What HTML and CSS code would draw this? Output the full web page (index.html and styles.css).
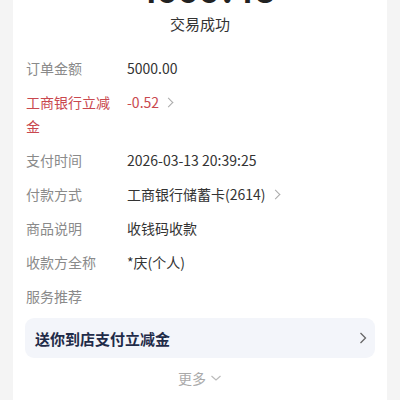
FILE: index.html
```html
<!DOCTYPE html>
<html lang="zh-CN">
<head>
    <meta charset="UTF-8">
    <title>交易详情</title>
    <link rel="stylesheet" href="styles.css">
</head>
<body>
    <div class="sheet">
        <div class="amount">-4999.48</div>
        <div class="status">交易成功</div>
        <div class="rows">
            <div class="row"><span class="label">订单金额</span><span class="value">5000.00</span></div>
            <div class="row red"><span class="label">工商银行立减金</span><span class="value">-0.52<i class="arrow"></i></span></div>
            <div class="row"><span class="label">支付时间</span><span class="value">2026-03-13 20:39:25</span></div>
            <div class="row"><span class="label">付款方式</span><span class="value">工商银行储蓄卡(2614)<i class="arrow"></i></span></div>
            <div class="row"><span class="label">商品说明</span><span class="value">收钱码收款</span></div>
            <div class="row"><span class="label">收款方全称</span><span class="value">*庆(个人)</span></div>
            <div class="row"><span class="label">服务推荐</span></div>
        </div>
        <div class="promo">
            <span>送你到店支付立减金</span>
            <svg width="8" height="14" viewBox="0 0 8 14"><path d="M1.5 2 L6.5 7 L1.5 12" fill="none" stroke="#666" stroke-width="1.3"/></svg>
        </div>
        <div class="more">更多<svg width="12" height="8" viewBox="0 0 12 8"><path d="M1.5 2 L6 6 L10.5 2" fill="none" stroke="#bbb" stroke-width="1.2"/></svg></div>
    </div>
</body>
</html>
```

FILE: styles.css
```css
body { margin: 0; background: #f4f4f4; font-family: "Noto Sans CJK SC", "Noto Sans", sans-serif; }
.sheet { background: #fff; margin: 0 13px; height: 400px; overflow: hidden; }
.amount { font-size: 34px; font-weight: bold; color: #222; text-align: center; line-height: 40px; margin-top: -31px; letter-spacing: 1px; }
.status { text-align: center; font-size: 15px; color: #333; line-height: 20px; margin-top: 5px; }
.rows { padding: 22px 13px 0 13px; }
.row { display: flex; align-items: flex-start; font-size: 14px; line-height: 24px; margin-bottom: 10px; color: #333; }
.label { width: 90px; flex-shrink: 0; color: #8a8a8a; margin-right: 11px; }
.row.red .label, .row.red .value { color: #c9484e; }
.value { display: flex; align-items: center; }
.arrow { display: inline-block; width: 6px; height: 6px; border-top: 1px solid #aaa; border-right: 1px solid #aaa; transform: rotate(45deg); margin-left: 6px; }
.promo { margin: 0 12px; background: #f3f5fa; border-radius: 9px; height: 40px; display: flex; align-items: center; justify-content: space-between; padding: 0 8px 0 10px; font-size: 15px; font-weight: bold; color: #1f2b48; }
.more { text-align: center; font-size: 14px; color: #aaa; margin-top: 10px; line-height: 20px; display: flex; justify-content: center; align-items: center; gap: 4px; }
```
